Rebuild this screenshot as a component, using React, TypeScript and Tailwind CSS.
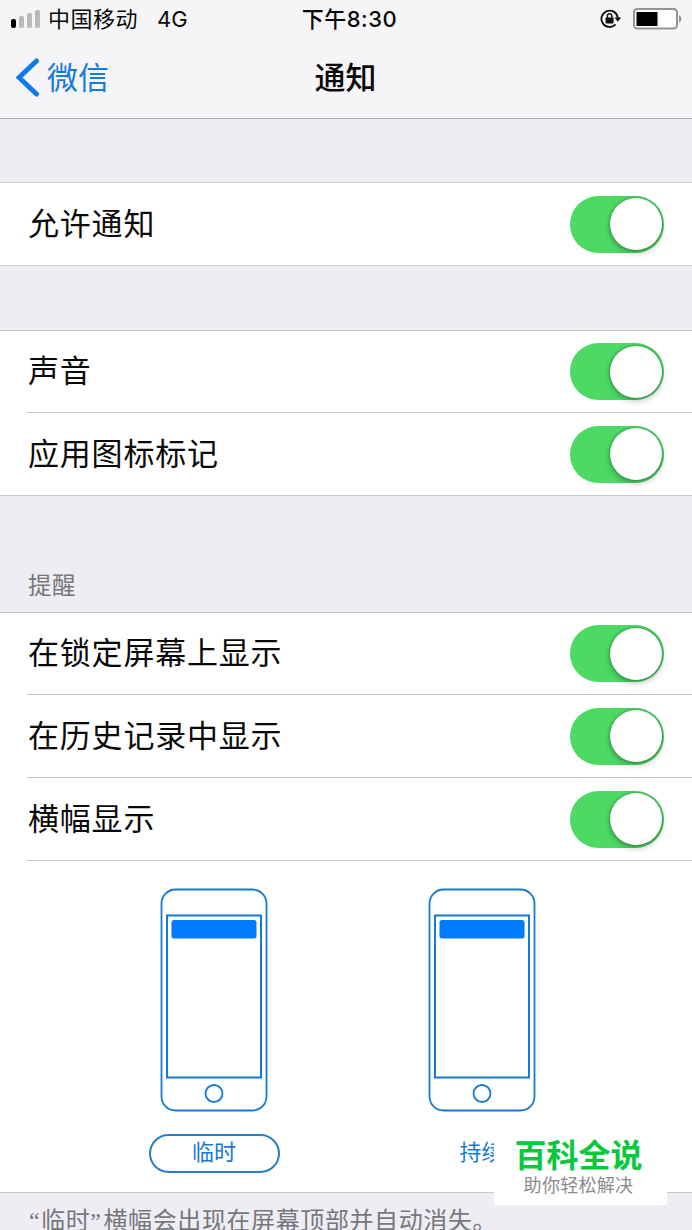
import React from 'react';

const ALLOW = [{ label: '允许通知', size: 'h-[82px]' }];

const BADGES = [
  { label: '声音', size: 'h-[82px]' },
  { label: '应用图标标记', size: 'h-[82px]' },
];

const ALERTS = [
  { label: '在锁定屏幕上显示', size: 'h-[82px]' },
  { label: '在历史记录中显示', size: 'h-[83px]' },
  { label: '横幅显示', size: 'h-[83px]' },
];

const BARS = ['h-[9px] bg-black', 'h-3 bg-[#b9b9bb]', 'h-[15px] bg-[#b9b9bb]', 'h-[18px] bg-[#b9b9bb]'];

const Toggle = () => (
  <button className="flex h-[57px] w-[94px] items-center justify-end rounded-full bg-[#4cd964] pr-[2px]">
    <span className="h-[52px] w-[52px] rounded-full bg-white shadow-[0_3px_6px_rgba(0,0,0,0.25),0_0_3px_rgba(0,0,0,0.4)]" />
  </button>
);

const Row = ({ label, size, last }: { label: string; size: string; last?: boolean }) => (
  <div className={`${size} pl-[27px]`}>
    <div className={`flex h-full items-center justify-between pr-7 ${last ? '' : 'border-b border-[#c8c7cc]'}`}>
      <span className="pb-[2px] pl-px text-[31px] leading-none tracking-[0.8px]">{label}</span>
      <Toggle />
    </div>
  </div>
);

const Phone = () => (
  <svg width="108" height="224" viewBox="0 0 108 224" fill="none" stroke="#1779d4" strokeWidth="1.8">
    <rect x="1.5" y="1.5" width="105" height="221" rx="14" />
    <rect x="7" y="27.5" width="94" height="162" strokeWidth="2" />
    <rect x="11.5" y="32" width="85" height="18.5" rx="2.5" fill="#007aff" stroke="none" />
    <circle cx="54" cy="205.5" r="8.5" />
  </svg>
);

const StatusBar = () => (
  <div className="grid h-[38px] grid-cols-3 items-center text-[22px] leading-none">
    <div className="flex items-center pl-[11px]">
      <div className="flex items-end gap-[3px]">
        {BARS.map((bar, i) => (
          <span key={i} className={`w-[5px] rounded-[2px] ${bar}`} />
        ))}
      </div>
      <span className="ml-2 tracking-[0.5px]">中国移动</span>
      <span className="ml-[19px]">4G</span>
    </div>
    <div className="pl-[71px] font-medium tracking-[0.5px] whitespace-nowrap">下午8:30</div>
    <div className="flex items-center justify-end pr-[9px]">
      <svg width="22" height="20" viewBox="0 0 22 20" fill="none">
        <path d="M15.6 15.4A8.2 8.2 0 1 1 17.8 9" stroke="#111" strokeWidth="1.8" />
        <path d="M14.4 8.6h6.8l-3.4 4.2z" fill="#111" />
        <rect x="5.6" y="8.4" width="8" height="6" rx="0.8" fill="#111" />
        <path d="M7.4 9V6.9a2.2 2.2 0 0 1 4.4 0V9" stroke="#111" strokeWidth="1.5" />
      </svg>
      <svg className="ml-[11px]" width="50" height="22" viewBox="0 0 50 22" fill="none">
        <rect x="1" y="1" width="43" height="19.5" rx="3.5" fill="#fff" stroke="#949496" strokeWidth="2" />
        <rect x="3.5" y="4" width="21" height="14" rx="0.5" fill="#000" />
        <path d="M46 7.5c3.2 1 3.2 5.8 0 6.8z" fill="#949496" />
      </svg>
    </div>
  </div>
);

const NavBar = () => (
  <div className="grid h-20 grid-cols-3 items-center">
    <div className="flex items-center pl-4 text-[#157bdc]">
      <svg width="24" height="40" viewBox="0 0 24 40" fill="none">
        <path d="M20.5 3L3 19.5L20.5 36" stroke="#0f7be6" strokeWidth="5" strokeLinecap="round" />
      </svg>
      <span className="ml-[7px] pb-[2px] text-[31px] leading-none">微信</span>
    </div>
    <h1 className="pr-px pb-px text-center text-[31px] leading-none font-medium">通知</h1>
  </div>
);

const App = () => {
  return (
    <div className="relative h-[1230px] w-[692px] overflow-hidden bg-[#eeedf3] font-[Inter,'Noto_Sans_CJK_SC',sans-serif] text-[#0a0a0a]">
      <header className="h-[119px] border-b border-[#a9a9ad] bg-[#f5f5f7]">
        <StatusBar />
        <NavBar />
      </header>

      <section className="mt-[63px] border-y border-[#d0cfd5] bg-white">
        {ALLOW.map((row) => (
          <Row key={row.label} {...row} last />
        ))}
      </section>

      <section className="mt-16 border-y border-[#c8c7cc] bg-white">
        {BADGES.map((row, i) => (
          <Row key={row.label} {...row} last={i === BADGES.length - 1} />
        ))}
      </section>

      <h2 className="flex h-[116px] items-end pb-[13px] pl-7 text-[23.5px] leading-[26px] tracking-[0.5px] text-[#77777c]">提醒</h2>

      <section className="border-y border-[#c8c7cc] bg-white">
        {ALERTS.map((row) => (
          <Row key={row.label} {...row} />
        ))}
        <div className="flex h-[331px] pt-[27px] pl-[148px] text-[22px] leading-none text-[#1779d4]">
          <div className="flex w-[132px] flex-col items-center">
            <Phone />
            <span className="mt-[22px] flex h-[39px] w-[131px] items-center justify-center rounded-full border-2 border-[#2a7dcb] pb-[3px]">
              临时
            </span>
          </div>
          <div className="ml-[135.5px] flex w-[132px] flex-col items-center">
            <Phone />
            <span className="mt-[22px] flex h-[39px] items-center pb-[3px]">持续</span>
          </div>
        </div>
      </section>

      <p className="pt-[14px] pl-[29px] text-[24px] leading-[28px] tracking-[0.6px] whitespace-nowrap text-[#77777c]">
        <span className="font-['Liberation_Serif',serif] tracking-[1.5px]">“</span>临时
        <span className="font-['Liberation_Serif',serif] tracking-[2.5px]">”</span>横幅会出现在屏幕顶部并自动消失。
      </p>

      {/* Site badge */}
      <div className="absolute top-[1134px] left-[494px] flex h-[71px] w-[173px] flex-col items-center bg-white pr-1 whitespace-nowrap">
        <span className="mt-[5px] text-[32px] leading-[33px] font-bold text-[#0ac83c]">百科全说</span>
        <span className="mt-[4px] text-[18px] leading-[20px] tracking-[0.3px] text-[#8a8a8a]">助你轻松解决</span>
      </div>
    </div>
  );
};

export default App;
